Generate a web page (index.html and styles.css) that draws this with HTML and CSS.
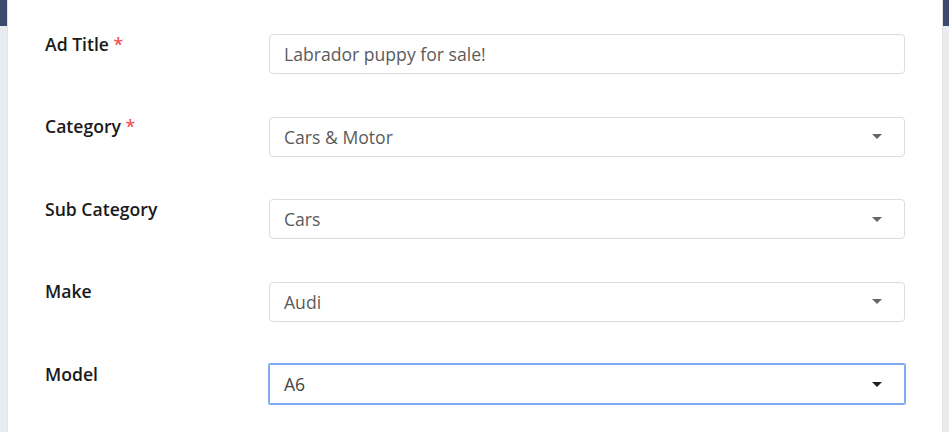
FILE: index.html
```html
<!DOCTYPE html>
<html lang="en">
<head>
<meta charset="utf-8">
<title>Post Ad</title>
<link rel="stylesheet" href="styles.css">
</head>
<body>
<div class="card">
  <form class="form">
    <div class="row">
      <label class="label">Ad Title <span class="req">*</span></label>
      <div class="field">Labrador puppy for sale!</div>
    </div>
    <div class="row">
      <label class="label">Category <span class="req">*</span></label>
      <div class="field select"><span>Cars &amp; Motor</span><span class="caret"></span></div>
    </div>
    <div class="row">
      <label class="label">Sub Category</label>
      <div class="field select"><span>Cars</span><span class="caret"></span></div>
    </div>
    <div class="row">
      <label class="label">Make</label>
      <div class="field select"><span>Audi</span><span class="caret"></span></div>
    </div>
    <div class="row">
      <label class="label">Model</label>
      <div class="field select focus"><span>A6</span><span class="caret dark"></span></div>
    </div>
  </form>
</div>
</body>
</html>
```
FILE: styles.css
```css
html, body {
  margin: 0;
  height: 100%;
}
body {
  background: linear-gradient(#3b4a6d 0, #3b4a6d 26px, #e9ecef 26px);
  font-family: "Open Sans", "Liberation Sans", sans-serif;
  overflow: hidden;
}
.card {
  background: #fff;
  margin: 0 6px 0 7px;
  height: 100%;
  box-sizing: border-box;
  border-left: 1px solid #dfe3e7;
  border-right: 1px solid #dfe3e7;
}
.form {
  padding: 34px 37px 0 37px;
  display: flex;
  flex-direction: column;
  gap: 42.5px;
}
.row {
  display: grid;
  grid-template-columns: 224px 1fr;
  align-items: start;
}
.label {
  font-size: 17.6px;
  line-height: 24px;
  font-weight: 600;
  color: #1a1a1a;
  margin-top: -2.5px;
}
.req {
  color: #f05454;
}
.field {
  box-sizing: border-box;
  height: 40px;
  border: 1px solid #dcdcdc;
  border-radius: 4px;
  padding: 0 14px;
  font-size: 17.6px;
  line-height: 38px;
  color: #5b5b5b;
}
.select {
  display: flex;
  justify-content: space-between;
  align-items: center;
  padding-right: 22px;
}
.caret {
  width: 0;
  height: 0;
  border-left: 5px solid transparent;
  border-right: 5px solid transparent;
  border-top: 5px solid #666;
}
.caret.dark {
  border-top-color: #222;
}
.focus {
  border-color: #80aaf2;
  box-shadow: 0 0 0 1px #80aaf2;
  border-radius: 1px;
  color: #444;
}
```
